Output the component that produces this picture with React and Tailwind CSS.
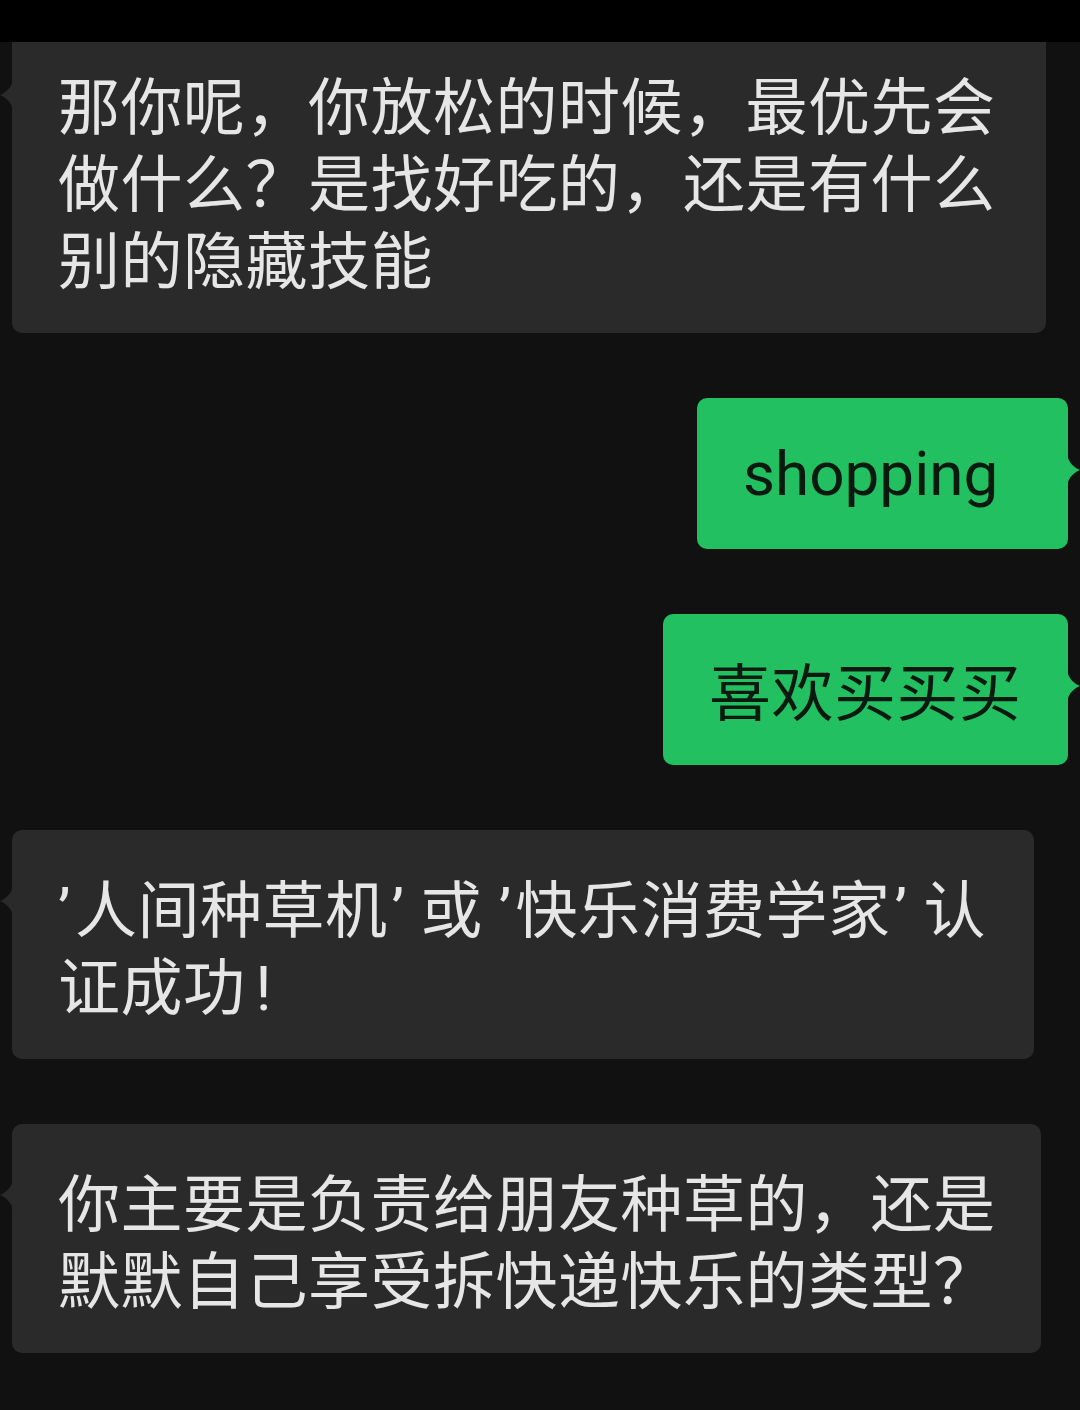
const font = { fontFamily: '"Noto Sans CJK SC", "Noto Sans", sans-serif' }

function Q({ children, className = '' }) {
  return <span className={`font-[Roboto,sans-serif] leading-[0] ${className}`}>{children}</span>
}

function LeftTail({ top }) {
  return (
    <svg
      className={`absolute -left-[12px] ${top} h-[38px] w-[13px]`}
      viewBox="0 0 13 38"
      fill="#2a2a2a"
    >
      <path d="M13 0 C13 9 9 15 0 19 C9 23 13 29 13 38 Z" />
    </svg>
  )
}

function RightTail() {
  return (
    <svg
      className="absolute -right-[12px] top-[52px] h-[40px] w-[13px]"
      viewBox="0 0 13 40"
      fill="#22c060"
    >
      <path d="M0 0 C0 10 4 16 13 20 C4 24 0 30 0 40 Z" />
    </svg>
  )
}

function Received({ lines, width, first }) {
  return (
    <div className="flex justify-start pl-[12px]">
      <div
        className={`relative bg-[#2a2a2a] text-[#e6e6e6] text-[62px] leading-[77px] tracking-[0.5px] whitespace-nowrap pl-[46px] pb-[37px] ${
          first ? 'rounded-b-[10px] pt-[23px]' : 'rounded-[10px] pt-[38px]'
        } ${width}`}
      >
        <LeftTail top={first ? 'top-[34px]' : 'top-[52px]'} />
        {lines.map((l, i) => (
          <div key={i} className="h-[77px]">{l}</div>
        ))}
      </div>
    </div>
  )
}

function Sent({ text, width, latin }) {
  return (
    <div className="flex justify-end pr-[12px]">
      <div
        className={`relative bg-[#22c060] text-[#0b1a10] text-[62px] leading-[77px] whitespace-nowrap rounded-[10px] pl-[46px] pt-[37px] pb-[37px] ${
          latin ? 'font-[Roboto,sans-serif]' : 'tracking-[0.5px]'
        } ${width}`}
      >
        {text}
        <RightTail />
      </div>
    </div>
  )
}

export default function App() {
  return (
    <div className="w-[1080px] h-[1410px] bg-[#111111] overflow-hidden" style={font}>
      <div className="h-[42px] bg-black" />
      <div className="flex flex-col gap-[65px]">
        <Received
          first
          width="w-[1034px]"
          lines={['那你呢，你放松的时候，最优先会', '做什么？是找好吃的，还是有什么', '别的隐藏技能']}
        />
        <Sent latin text="shopping" width="w-[371px]" />
        <Sent text="喜欢买买买" width="w-[405px]" />
        <Received
          width="w-[1022px]"
          lines={[
            <>
              <Q className="mr-[4px]">’</Q>人间种草机<Q className="ml-[4px]">’ </Q>或<Q> </Q>
              <Q className="mr-[4px]">’</Q>快乐消费学家<Q className="ml-[4px]">’ </Q>认
            </>,
            <>
              证成功<Q className="ml-[10px]">!</Q>
            </>,
          ]}
        />
        <Received
          width="w-[1029px]"
          lines={['你主要是负责给朋友种草的，还是', '默默自己享受拆快递快乐的类型？']}
        />
      </div>
    </div>
  )
}
